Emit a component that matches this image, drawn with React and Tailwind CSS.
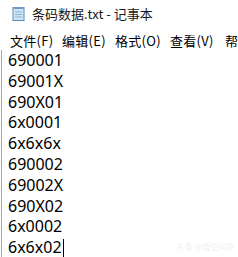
import React from "react";

const lines = [
  "690001",
  "69001X",
  "690X01",
  "6x0001",
  "6x6x6x",
  "690002",
  "69002X",
  "690X02",
  "6x0002",
  "6x6x02",
];

const menus = [
  { label: "文件(F)", w: "w-[52px]" },
  { label: "编辑(E)", w: "w-[53px]" },
  { label: "格式(O)", w: "w-[55px]" },
  { label: "查看(V)", w: "w-[55px]" },
  { label: "帮助(H)", w: "w-[60px]" },
];

// little notepad icon in the title bar
const NotepadIcon = () => (
  <svg width="13" height="15" viewBox="0 0 13 15">
    <rect x="1" y="1.5" width="11" height="13" fill="#cfe6f7" stroke="#5a8ab5" strokeWidth="1" />
    <rect x="1.5" y="1" width="10" height="2" fill="#6d9cc8" />
    <line x1="3" y1="6" x2="10" y2="6" stroke="#8fb3d3" />
    <line x1="3" y1="8.5" x2="10" y2="8.5" stroke="#8fb3d3" />
    <line x1="3" y1="11" x2="10" y2="11" stroke="#8fb3d3" />
  </svg>
);

const App = () => {
  return (
    <div className="w-[238px] h-[257px] bg-white overflow-hidden flex flex-col text-black font-['Noto_Sans','Noto_Sans_CJK_SC',sans-serif]">
      {/* title bar */}
      <div className="h-[27px] flex items-center pl-[12px] shrink-0">
        <NotepadIcon />
        <span className="ml-[7px] text-[13px] leading-none text-[#1a1a1a] font-['Noto_Sans_CJK_SC',sans-serif]">
          条码数据.txt - 记事本
        </span>
      </div>

      {/* menu bar */}
      <div className="h-[23px] flex items-center pt-[3px] pl-[10px] shrink-0 whitespace-nowrap overflow-hidden text-[13px] leading-none font-['Noto_Sans_CJK_SC',sans-serif]">
        {menus.map((m) => (
          <span key={m.label} className={`${m.w} shrink-0 tracking-[0.3px]`}>
            {m.label}
          </span>
        ))}
      </div>

      {/* edit area */}
      <div className="flex-1 ml-[1px] border-l border-[#a8a8a8] pl-[6px] relative">
        {lines.map((t, i) => (
          <div key={i} className="text-[16px] leading-[20.8px] whitespace-nowrap flex items-center">
            <span>{t}</span>
            {i === lines.length - 1 && <span className="inline-block w-px h-[18px] bg-black ml-[1px]" />}
          </div>
        ))}
        <span className="absolute right-[4px] bottom-[5px] text-[8px] text-[#f0f0f0] font-['Noto_Sans_CJK_SC',sans-serif]">
          头条 @悟空问答
        </span>
      </div>
    </div>
  );
};

export default App;
